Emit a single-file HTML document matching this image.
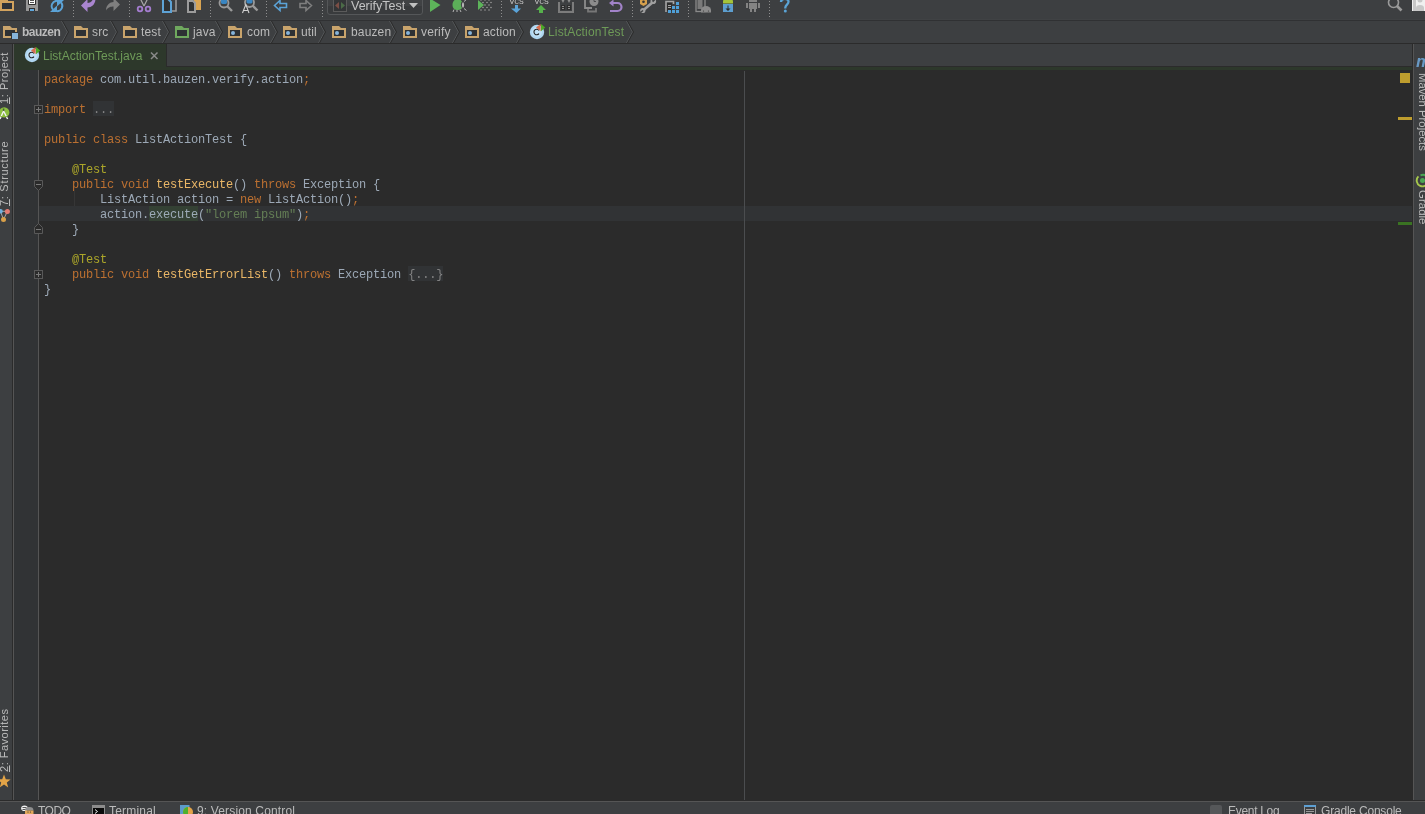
<!DOCTYPE html>
<html><head><meta charset="utf-8">
<style>
*{box-sizing:border-box}
html,body{margin:0;padding:0}
body{-webkit-font-smoothing:antialiased;width:1425px;height:814px;overflow:hidden;background:#3D3F41;position:relative;font-family:"Liberation Sans",sans-serif;}
.a{position:absolute}
#toolbar{left:0;top:0;width:1425px;height:19px;background:#3D3F41}
#tbl1{left:0;top:19px;width:1425px;height:1px;background:#404244}
#tbl2{left:0;top:20px;width:1425px;height:1px;background:#303133}
#crumbs{left:0;top:21px;width:1425px;height:22px;background:#3D3F41}
#crl{left:0;top:43px;width:1425px;height:1px;background:#2B2B2B}
#lstrip{left:0;top:44px;width:12px;height:756px;background:#3D3F41}
#lsl1{left:12px;top:44px;width:1px;height:756px;background:#2B2B2B}
#lsl2{left:13px;top:44px;width:1px;height:756px;background:#555555}
#rstrip{left:1414px;top:44px;width:11px;height:756px;background:#3D3F41}
#rsl1{left:1412px;top:44px;width:1px;height:756px;background:#2B2B2B}
#rsl2{left:1413px;top:44px;width:1px;height:756px;background:#555555}
#tabbar{left:14px;top:44px;width:1398px;height:22px;background:#3D3F41}
#tabline{left:166px;top:66px;width:1246px;height:1px;background:#2B2B2B}
#tabline2{left:166px;top:44px;width:1px;height:22px;background:#2B2B2B}
#tab{left:14px;top:44px;width:152px;height:26px;background:#2D382B}
#tabstrip{left:14px;top:67px;width:1398px;height:3px;background:#2D382B}
#gutter{left:14px;top:70px;width:24px;height:730px;background:#313335}
#gline{left:38px;top:70px;width:1px;height:730px;background:#555555}
#editor{left:39px;top:70px;width:1373px;height:730px;background:#2B2B2B}
#margin{left:744px;top:71px;width:1px;height:729px;background:#4B4D4F}
#curline{left:39px;top:206px;width:1373px;height:15px;background:#313335}
#botl1{left:0;top:800px;width:1425px;height:1px;background:#2B2B2B}
#botl2{left:0;top:801px;width:1425px;height:1px;background:#555555}
#status{left:0;top:802px;width:1425px;height:12px;background:#3D3F41}
.code{opacity:0.9;will-change:transform;font-family:"Liberation Mono",monospace;font-size:12px;letter-spacing:-0.2px;color:#A9B7C6;white-space:pre;line-height:15px;height:15px}
.k{color:#CC7832}
.s{color:#6A8759}
.an{color:#BBB529}
.m{color:#FFC66D}
.g{color:#8C8C8C}
.ui{will-change:transform;font-size:12px;color:#BBBBBB;white-space:nowrap;line-height:14px}
</style></head><body>
<div class="a" id="toolbar"></div>
<div class="a" id="tbl1"></div>
<div class="a" id="tbl2"></div>
<div class="a" id="crumbs"></div>
<div class="a" id="crl"></div>
<div class="a" id="lstrip"></div>
<div class="a" id="lsl1"></div>
<div class="a" id="lsl2"></div>
<div class="a" id="rstrip"></div>
<div class="a" id="rsl1"></div>
<div class="a" id="rsl2"></div>
<div class="a" id="tabbar"></div>
<div class="a" id="tabline"></div>
<div class="a" id="tabline2"></div>
<div class="a" id="tab"></div>
<div class="a" id="tabstrip"></div>
<div class="a" id="gutter"></div>
<div class="a" id="gline"></div>
<div class="a" id="editor"></div>
<div class="a" id="curline"></div>
<div class="a" id="margin"></div>
<div class="a" id="botl1"></div>
<div class="a" id="botl2"></div>
<div class="a" id="status"></div>





<!-- TOOLBAR -->
<svg class="a" style="left:0;top:0" width="800" height="19">
 <g fill="#8E8E8E"><g transform="translate(73,0)"><rect x="0" y="1" width="1" height="1"/><rect x="0" y="4" width="1" height="1"/><rect x="0" y="7" width="1" height="1"/><rect x="0" y="10" width="1" height="1"/><rect x="0" y="13" width="1" height="1"/><rect x="0" y="16" width="1" height="1"/></g><g transform="translate(129,0)"><rect x="0" y="1" width="1" height="1"/><rect x="0" y="4" width="1" height="1"/><rect x="0" y="7" width="1" height="1"/><rect x="0" y="10" width="1" height="1"/><rect x="0" y="13" width="1" height="1"/><rect x="0" y="16" width="1" height="1"/></g><g transform="translate(210,0)"><rect x="0" y="1" width="1" height="1"/><rect x="0" y="4" width="1" height="1"/><rect x="0" y="7" width="1" height="1"/><rect x="0" y="10" width="1" height="1"/><rect x="0" y="13" width="1" height="1"/><rect x="0" y="16" width="1" height="1"/></g><g transform="translate(266,0)"><rect x="0" y="1" width="1" height="1"/><rect x="0" y="4" width="1" height="1"/><rect x="0" y="7" width="1" height="1"/><rect x="0" y="10" width="1" height="1"/><rect x="0" y="13" width="1" height="1"/><rect x="0" y="16" width="1" height="1"/></g><g transform="translate(322,0)"><rect x="0" y="1" width="1" height="1"/><rect x="0" y="4" width="1" height="1"/><rect x="0" y="7" width="1" height="1"/><rect x="0" y="10" width="1" height="1"/><rect x="0" y="13" width="1" height="1"/><rect x="0" y="16" width="1" height="1"/></g><g transform="translate(501,0)"><rect x="0" y="1" width="1" height="1"/><rect x="0" y="4" width="1" height="1"/><rect x="0" y="7" width="1" height="1"/><rect x="0" y="10" width="1" height="1"/><rect x="0" y="13" width="1" height="1"/><rect x="0" y="16" width="1" height="1"/></g><g transform="translate(632,0)"><rect x="0" y="1" width="1" height="1"/><rect x="0" y="4" width="1" height="1"/><rect x="0" y="7" width="1" height="1"/><rect x="0" y="10" width="1" height="1"/><rect x="0" y="13" width="1" height="1"/><rect x="0" y="16" width="1" height="1"/></g><g transform="translate(688,0)"><rect x="0" y="1" width="1" height="1"/><rect x="0" y="4" width="1" height="1"/><rect x="0" y="7" width="1" height="1"/><rect x="0" y="10" width="1" height="1"/><rect x="0" y="13" width="1" height="1"/><rect x="0" y="16" width="1" height="1"/></g><g transform="translate(769,0)"><rect x="0" y="1" width="1" height="1"/><rect x="0" y="4" width="1" height="1"/><rect x="0" y="7" width="1" height="1"/><rect x="0" y="10" width="1" height="1"/><rect x="0" y="13" width="1" height="1"/><rect x="0" y="16" width="1" height="1"/></g></g>
 <!-- open -->
 <path d="M0 -2H8V1H14V11H0Z" fill="#D2A35E"/>
 <rect x="2" y="3" width="10" height="6" fill="#2F3338"/>
 <!-- save -->
 <rect x="26" y="-2" width="12" height="13" fill="#979797"/>
 <rect x="28" y="-2" width="8" height="7" rx="1" fill="#2E2E2E"/>
 <rect x="29" y="-2" width="6" height="6" fill="#FFFFFF"/>
 <rect x="30" y="0" width="4" height="1" fill="#555"/><rect x="30" y="2" width="4" height="1" fill="#555"/>
 <rect x="29" y="8" width="6" height="3" fill="#2E2E2E"/>
 <rect x="30" y="9" width="4" height="2" fill="#5FA8DE"/>
 <!-- sync -->
 <path d="M57 0.8A5.3 5.3 0 0 0 53 9.6" fill="none" stroke="#5BA3D7" stroke-width="1.9"/>
 <path d="M50 12H57V5.5Z" fill="#5BA3D7"/>
 <path d="M57 11.2A5.3 5.3 0 0 0 61 2.4" fill="none" stroke="#5BA3D7" stroke-width="1.9"/>
 <path d="M64 0H57V6.5Z" fill="#5BA3D7"/>
 <!-- undo -->
 <path d="M81 5.5L87.5 -1V3C90 3 92.5 1.5 93 -1.5H95.5C95.5 4 92 7.5 87.5 7.5V12Z" fill="#A985CF"/>
 <!-- redo -->
 <path d="M120 4.5L113.5 -2V2C110 2 106 5 106 10.5C108 7 111 6.5 113.5 6.5V11Z" fill="#7F7F7F"/>
 <!-- cut -->
 <path d="M140.5 -1L144 6M147.5 -1L144 6" stroke="#A8A8A8" stroke-width="1.2" fill="none"/>
 <circle cx="140" cy="9" r="2.3" fill="none" stroke="#A47DCF" stroke-width="1.8"/>
 <circle cx="148" cy="9" r="2.3" fill="none" stroke="#A47DCF" stroke-width="1.8"/>
 <!-- copy -->
 <path d="M170 -1H176V11H170Z" fill="none" stroke="#9A9A9A" stroke-width="1.6"/>
 <path d="M163 -1H168L171 2V12H163Z" fill="#2F3133" stroke="#5EA3D6" stroke-width="2"/>
 <!-- paste -->
 <rect x="194" y="-1" width="7" height="11" fill="#D9A452"/>
 <path d="M188 1H193L195 3V12H188Z" fill="#2F3133" stroke="#9C9C9C" stroke-width="2"/>
 <!-- find -->
 <circle cx="224" cy="3" r="4.5" fill="none" stroke="#9A9A9A" stroke-width="1.8"/>
 <path d="M221 -1H227V2.5Q227 4 224 4Q221 4 221 2.5Z" fill="#3A86C2"/>
 <path d="M227 6L232 11" stroke="#9A9A9A" stroke-width="2.4"/>
 <!-- replace -->
 <circle cx="249.5" cy="2.5" r="4.5" fill="none" stroke="#9A9A9A" stroke-width="1.8"/>
 <path d="M246.5 -1.5H252.5V2Q252.5 3.5 249.5 3.5Q246.5 3.5 246.5 2Z" fill="#3A86C2"/>
 <path d="M252.5 5.5L257.5 10.5" stroke="#9A9A9A" stroke-width="2.4"/>
 <path d="M242.5 13L245.8 4.5L249 13M243.5 10.5H248" stroke="#D0D0D0" stroke-width="1.1" fill="none"/>
 <!-- back -->
 <path d="M274.5 5.5L280 0.5V3.5H286.5V7.5H280V10.5Z" fill="none" stroke="#5BA3D7" stroke-width="1.6" stroke-linejoin="miter"/>
 <!-- forward -->
 <path d="M311.5 5.5L306 0.5V3.5H300V7.5H306V10.5Z" fill="none" stroke="#7F7F7F" stroke-width="1.6"/>
 <!-- combo -->
 <path d="M327.5 -3V12A2.5 2.5 0 0 0 330 14.5H420A2.5 2.5 0 0 0 422.5 12V-3" fill="#393B3D" stroke="#555759" stroke-width="1"/>
 <rect x="328" y="-3" width="94" height="9" fill="#404244"/>
 <rect x="333.5" y="-1.5" width="13" height="13" fill="#333537" stroke="#5B5B5B" stroke-width="1"/>
 <path d="M339 2L335 5.5L339 9Z" fill="#7B4E45"/>
 <path d="M341 2L345 5.5L341 9Z" fill="#4B6B47"/>
 <path d="M409 3H418L413.5 8Z" fill="#C0C0C0"/>
 <!-- run -->
 <path d="M430 -1.5L440.5 5L430 12Z" fill="#5DB35A"/>
 <!-- debug -->
 <path d="M458 -1C454 -1 452.5 2 452.5 5C452.5 8 454.5 10 458 10C460 10 461.5 9 462 8C460.5 6 460.5 3 462 1.5C461 0 459.5 -1 458 -1Z" fill="#5CAE59"/>
 <path d="M463 2C461.5 3.5 461.5 6.5 463 8C464.5 6.5 464.5 3.5 463 2Z" fill="#B5B5B5"/>
 <path d="M464 1.5L466.5 -0.5M464 8.5L466.5 10.5M454 9.5L453 12M457 10L457 12M460 10L461 12" stroke="#B5B5B5" stroke-width="1" fill="none"/>
 <!-- coverage -->
 <path d="M478 0L484 5L478 10Z" fill="#5DB35A"/>
 <g fill="#9A9A9A"><circle cx="481" cy="0" r="0.8"/><circle cx="485" cy="0" r="0.8"/><circle cx="489" cy="0" r="0.8"/><circle cx="483" cy="2.5" r="0.8"/><circle cx="487" cy="2.5" r="0.8"/><circle cx="491" cy="2.5" r="0.8"/><circle cx="485" cy="5" r="0.8"/><circle cx="489" cy="5" r="0.8"/><circle cx="483" cy="7.5" r="0.8"/><circle cx="487" cy="7.5" r="0.8"/><circle cx="491" cy="7.5" r="0.8"/><circle cx="481" cy="10" r="0.8"/><circle cx="485" cy="10" r="0.8"/><circle cx="489" cy="10" r="0.8"/></g>
 <!-- vcs update -->
 <text x="509.5" y="4" font-family="Liberation Mono" font-size="8" fill="#C8C8C8" style="will-change:transform">VCS</text>
 <path d="M515 5H518V8.5H521L516.5 13L511 8.5H515Z" fill="#5AA3D8"/>
 <text x="534.5" y="4" font-family="Liberation Mono" font-size="8" fill="#C8C8C8">VCS</text>
 <path d="M541 5L546 10H543V13H539V10H536Z" fill="#56B04B"/>
 <!-- update project -->
 <path d="M559 2V12H573V2" fill="none" stroke="#7C7C7C" stroke-width="2"/>
 <rect x="561" y="5" width="4" height="5" fill="#2E2E2E"/><rect x="567" y="5" width="4" height="5" fill="#2E2E2E"/>
 <g fill="#8C8C8C"><rect x="562" y="6" width="2" height="1"/><rect x="562" y="8" width="2" height="1"/><rect x="568" y="6" width="2" height="1"/><rect x="568" y="8" width="2" height="1"/>
 <path d="M561.5 0H564.5L563 3Z"/><path d="M567.5 0H570.5L569 3Z"/></g>
 <!-- history -->
 <path d="M585 -1V8H592" fill="none" stroke="#8C8C8C" stroke-width="1.8"/>
 <path d="M588 9V11.5H596V8" fill="none" stroke="#777" stroke-width="1.8"/>
 <circle cx="594" cy="1.5" r="4.5" fill="#8C8C8C"/>
 <path d="M594 -1V1.5H596" stroke="#3D3F41" stroke-width="0.8" fill="none"/>
 <!-- revert -->
 <path d="M610 11H617.5A4 4 0 0 0 617.5 3H613" fill="none" stroke="#A283C9" stroke-width="2.2"/>
 <path d="M609 3L613.5 -0.5V6.5Z" fill="#A283C9"/>
 <!-- settings -->
 <path d="M653 2L643 10.5" stroke="#A0A0A0" stroke-width="2.6"/>
 <circle cx="653.3" cy="1.3" r="2.8" fill="#A0A0A0"/>
 <path d="M652.5 1.5L655 -1" stroke="#3D3F41" stroke-width="1.8"/>
 <circle cx="642.8" cy="10.5" r="2.6" fill="#A0A0A0"/>
 <path d="M643 10.5L640.5 12.5" stroke="#3D3F41" stroke-width="1.6"/>
 <path d="M640 -1H647V4L643.5 6L640 4Z" fill="#D6A04C"/>
 <circle cx="643.5" cy="1.8" r="1.3" fill="#333"/>
 <!-- project structure -->
 <path d="M666 12V1.5H673.5V4" fill="none" stroke="#A5A5A5" stroke-width="1.6"/>
 <rect x="667" y="3" width="5" height="8" fill="#2E2E2E"/>
 <rect x="668" y="5" width="3" height="1" fill="#A5A5A5"/><rect x="668" y="7" width="3" height="1" fill="#A5A5A5"/>
 <g fill="#4FA0D8"><rect x="668" y="10" width="3" height="3"/><rect x="672" y="10" width="3" height="3"/><rect x="676" y="10" width="3" height="3"/><rect x="672" y="6" width="3" height="3"/><rect x="676" y="6" width="3" height="3"/><rect x="676" y="2" width="3" height="3"/></g>
 <!-- avd -->
 <rect x="696" y="-1" width="9" height="12.5" fill="none" stroke="#8A8A8A" stroke-width="1.3"/>
 <rect x="697.5" y="0" width="5" height="9" fill="#7A7A7A"/>
 <path d="M701 12.5V10A5 4 0 0 1 711 10V12.5Z" fill="#8A8A8A"/>
 <circle cx="703.5" cy="11" r="0.6" fill="#333"/><circle cx="708.5" cy="11" r="0.6" fill="#333"/>
 <!-- sdk -->
 <path d="M723 3.5V1.5A5 4 0 0 1 733 1.5V3.5Z" fill="#A4C43A"/>
 <rect x="723" y="4" width="10" height="8" fill="#5D9ECF"/>
 <path d="M727.5 5.5H728.5V8.5H730.5L728 11L725.5 8.5H727.5Z" fill="#2B2B2B"/>
 <!-- android -->
 <g fill="#848484"><rect x="749" y="3" width="8" height="6"/><rect x="746" y="3" width="2" height="5"/><rect x="758" y="3" width="2" height="5"/><rect x="750" y="9" width="2" height="3"/><rect x="754" y="9" width="2" height="3"/><rect x="749" y="0" width="8" height="2"/></g>
 <!-- help -->
 <path d="M781 2C781 -1.8 788.5 -2.2 788.5 1.8C788.5 4.5 785.3 4.8 785.3 7.8V8.5" fill="none" stroke="#5BA4D6" stroke-width="2.3"/>
 <circle cx="785.3" cy="11" r="1.5" fill="#5BA4D6"/>
</svg>
<div class="a ui" style="left:351px;top:-1px;color:#C4C4C4;font-size:12.5px">VerifyTest</div>
<svg class="a" style="left:1385px;top:0" width="40" height="19">
 <circle cx="8.5" cy="2.5" r="5" fill="none" stroke="#9A9A9A" stroke-width="1.6"/>
 <path d="M12 6L16.5 10.5" stroke="#9A9A9A" stroke-width="2.6"/>
 <rect x="27" y="-2" width="13" height="13" fill="#F0F0F0"/>
 <rect x="28" y="-2" width="3" height="13" fill="#C8C8C8"/>
 <circle cx="35" cy="0" r="2.5" fill="#C8C8C8"/>
 <path d="M31 11V8A4 3 0 0 1 39 8V11Z" fill="#C8C8C8"/>
</svg>

<!-- SIDE STRIPS -->
<div class="a ui" style="left:-2px;top:104px;transform:rotate(-90deg);transform-origin:0 0;font-size:11px;line-height:13px;letter-spacing:0.55px"><span style="text-decoration:underline">1</span>: Project</div>
<div class="a ui" style="left:-2px;top:206px;transform:rotate(-90deg);transform-origin:0 0;font-size:11px;line-height:13px;letter-spacing:0.7px"><span style="text-decoration:underline">7</span>: Structure</div>
<div class="a ui" style="left:-2px;top:772px;transform:rotate(-90deg);transform-origin:0 0;font-size:11px;line-height:13px;letter-spacing:0.5px"><span style="text-decoration:underline">2</span>: Favorites</div>
<svg class="a" style="left:0;top:104px" width="12" height="20">
 <circle cx="4.2" cy="8.4" r="5.2" fill="#8CBF3F"/>
 <path d="M3.6 4.5L3.6 9" stroke="#4A5A3A" stroke-width="1.5"/>
 <path d="M3.6 7L0 15M3.6 7L7.6 15" stroke="#F2F2F2" stroke-width="1.4" fill="none"/>
 <path d="M0.5 12.5H7" stroke="#8CBF3F" stroke-width="1"/>
</svg>
<svg class="a" style="left:0;top:204px" width="12" height="20">
 <path d="M0.5 7.3H7.4M0.5 7.3L3.5 15.5M7.4 7.3L3.5 15.5" stroke="#A8A8A8" stroke-width="1"/>
 <circle cx="0.5" cy="7.3" r="2.3" fill="#6FB0E0"/>
 <circle cx="7.4" cy="7.4" r="2.5" fill="#E47B73"/>
 <circle cx="3.5" cy="15.5" r="2.5" fill="#D9A049"/>
</svg>
<svg class="a" style="left:0;top:774px" width="12" height="16">
 <path d="M4 0.5L5.8 5.3L10.6 5.4L6.8 8.5L8.2 13.5L4 10.6L-0.2 13.5L1.2 8.5L-2.6 5.4L2.2 5.3Z" fill="#E3A447"/>
</svg>
<div class="a ui" style="left:1429px;top:73px;transform:rotate(90deg);transform-origin:0 0;font-size:11.3px;line-height:13px">Maven Projects</div>
<div class="a ui" style="left:1429px;top:190px;transform:rotate(90deg);transform-origin:0 0;font-size:11.5px;line-height:13px">Gradle</div>
<div class="a" style="left:1416px;top:52px;font:italic bold 17px 'Liberation Sans',sans-serif;color:#6899C4;line-height:20px;will-change:transform">m</div>
<svg class="a" style="left:1414px;top:172px" width="11" height="18">
 <path d="M4.4 4.4A5.8 5.8 0 1 0 14.3 8.8" fill="none" stroke="#A6C84C" stroke-width="1.9"/>
 <path d="M6.5 3.3A5.8 5.8 0 0 1 12.5 4" fill="none" stroke="#4AA653" stroke-width="1.9"/>
 <circle cx="8.5" cy="8.6" r="2.5" fill="#4AA653"/>
</svg>
<div class="a" style="left:1400px;top:73px;width:10px;height:10px;background:#BE9D2E"></div>
<div class="a" style="left:1398px;top:117px;width:14px;height:3px;background:#BE9D2E"></div>
<div class="a" style="left:1398px;top:222px;width:14px;height:3px;background:#3A7322"></div>

<!-- TAB -->
<svg class="a" style="left:0;top:0" width="0" height="0">
 <defs>
  <g id="cls">
   <circle cx="10" cy="11" r="7.2" fill="#AFD6F0"/>
   <circle cx="10" cy="11" r="5" fill="#C2E2F7"/>
   <path d="M12 9.3A2.8 2.8 0 1 0 12 12.7" fill="none" stroke="#222" stroke-width="1.1"/>
   <path d="M13.6 3L9 6.6L13.6 10.2Z" fill="#D76E4E"/>
   <path d="M14 3L18.2 6.6L14 10.2Z" fill="#4CA825"/>
  </g>
 </defs>
</svg>
<svg class="a" style="left:22px;top:44px" width="22" height="22"><use href="#cls"/></svg>
<div class="a ui" id="tabtext" style="left:43px;top:49px;color:#6E9A58">ListActionTest.java</div>
<svg class="a" style="left:148px;top:49px" width="12" height="12"><path d="M3 3.5L9.5 10M9.5 3.5L3 10" stroke="#8A8A8A" stroke-width="1.5"/></svg>

<!-- BREADCRUMBS -->
<svg class="a" style="left:0;top:21px" width="660" height="22">
 <defs>
  <g id="chev"><path d="M0.5 0 L6.5 11 L0.5 22" fill="none" stroke="#56595B" stroke-width="1"/><path d="M1.5 0 L7.5 11 L1.5 22" fill="none" stroke="#2B2B2B" stroke-width="1"/></g>
  <g id="fold"><path d="M0 0h7l2 2h5v10h-14z" fill="#C9A46C"/><rect x="2" y="4" width="10" height="6" fill="#2E3134"/></g>
  <g id="pkg"><use href="#fold"/><circle cx="5" cy="7" r="2" fill="#86B4DA"/></g>
 </defs>
 <use href="#chev" x="61" y="0"/>
 <use href="#chev" x="110" y="0"/>
 <use href="#chev" x="162" y="0"/>
 <use href="#chev" x="215" y="0"/>
 <use href="#chev" x="270" y="0"/>
 <use href="#chev" x="318" y="0"/>
 <use href="#chev" x="389" y="0"/>
 <use href="#chev" x="452" y="0"/>
 <use href="#chev" x="516" y="0"/>
 <use href="#chev" x="626" y="0"/>
 <g transform="translate(3,5)"><use href="#fold"/><rect x="8" y="6" width="7" height="7" fill="#2E3134"/><rect x="9" y="7" width="6" height="6" fill="#86B4DA"/></g>
 <use href="#fold" x="74" y="5"/>
 <use href="#fold" x="123" y="5"/>
 <g transform="translate(175,5)"><path d="M0 0h7l2 2h5v10h-14z" fill="#6FA85E"/><rect x="2" y="4" width="10" height="6" fill="#2E3134"/></g>
 <use href="#pkg" x="228" y="5"/>
 <use href="#pkg" x="283" y="5"/>
 <use href="#pkg" x="332" y="5"/>
 <use href="#pkg" x="403" y="5"/>
 <use href="#pkg" x="465" y="5"/>
</svg>
<div class="a ui" style="left:22px;top:25px;font-weight:bold;letter-spacing:-0.5px">bauzen</div>
<div class="a ui" style="left:92px;top:25px;letter-spacing:0.15px">src</div>
<div class="a ui" style="left:141px;top:25px;letter-spacing:0.15px">test</div>
<div class="a ui" style="left:193px;top:25px;letter-spacing:0.15px">java</div>
<div class="a ui" style="left:247px;top:25px;letter-spacing:0.15px">com</div>
<div class="a ui" style="left:301px;top:25px;letter-spacing:0.15px">util</div>
<div class="a ui" style="left:351px;top:25px;letter-spacing:0.15px">bauzen</div>
<div class="a ui" style="left:421px;top:25px;letter-spacing:0.15px">verify</div>
<div class="a ui" style="left:483px;top:25px;letter-spacing:0.15px">action</div>
<svg class="a" style="left:527px;top:21px" width="22" height="22"><use href="#cls"/></svg>
<div class="a ui" style="left:548px;top:25px;color:#6E9A58;letter-spacing:0.15px">ListActionTest</div>


<!-- EDITOR DECOR -->
<div class="a" style="left:93px;top:101px;width:21px;height:15px;background:#313335"></div>
<div class="a" style="left:408px;top:266px;width:35px;height:15px;background:#313335"></div>
<div class="a" style="left:149px;top:206px;width:49px;height:15px;background:#344134"></div>
<div class="a" style="left:74px;top:191px;width:1px;height:15px;background:#363636"></div>
<svg class="a" style="left:0;top:0" width="50" height="300">
 <g fill="#2B2B2B" stroke="#595959" stroke-width="1">
  <rect x="34.5" y="105.5" width="8" height="8"/>
  <rect x="34.5" y="270.5" width="8" height="8"/>
  <path d="M34.5 180.5H42.5V186.5L38.5 190.5L34.5 186.5Z"/>
  <path d="M34.5 233.5H42.5V227.5L38.5 223.5L34.5 227.5Z"/>
 </g>
 <g fill="#7A7A7A">
  <rect x="36" y="109" width="5" height="1"/><rect x="38" y="107" width="1" height="5"/>
  <rect x="36" y="274" width="5" height="1"/><rect x="38" y="272" width="1" height="5"/>
  <rect x="36" y="184" width="5" height="1"/>
  <rect x="36" y="229" width="5" height="1"/>
 </g>
</svg>

<!-- CODE -->
<div class="a code" style="left:44px;top:73px"><span class="k">package</span> com.util.bauzen.verify.action<span class="k">;</span></div>
<div class="a code" style="left:44px;top:103px"><span class="k">import</span> <span class="g">...</span></div>
<div class="a code" style="left:44px;top:133px"><span class="k">public class</span> ListActionTest {</div>
<div class="a code" style="left:44px;top:163px">    <span class="an">@Test</span></div>
<div class="a code" style="left:44px;top:178px">    <span class="k">public void</span> <span class="m">testExecute</span>() <span class="k">throws</span> Exception {</div>
<div class="a code" style="left:44px;top:193px">        ListAction action = <span class="k">new</span> ListAction()<span class="k">;</span></div>
<div class="a code" style="left:44px;top:208px">        action.execute(<span class="s">"lorem ipsum"</span>)<span class="k">;</span></div>
<div class="a code" style="left:44px;top:223px">    }</div>
<div class="a code" style="left:44px;top:253px">    <span class="an">@Test</span></div>
<div class="a code" style="left:44px;top:268px">    <span class="k">public void</span> <span class="m">testGetErrorList</span>() <span class="k">throws</span> Exception <span class="g">{...}</span></div>
<div class="a code" style="left:44px;top:283px">}</div>

<!-- STATUS -->
<svg class="a" style="left:0;top:802px" width="330" height="12">
 <ellipse cx="24.5" cy="6.3" rx="3.3" ry="2.8" fill="#F2F2F2"/>
 <path d="M28 6L29.5 7" stroke="#F2F2F2" stroke-width="1"/>
 <rect x="22.5" y="5" width="4" height="0.9" fill="#444"/><rect x="22.5" y="7" width="4" height="0.9" fill="#444"/>
 <path d="M25 8.5C25 5.5 27 5 29.5 5C32 5 33.5 6 33.5 8.5Z" fill="#8E8E8E"/>
 <path d="M25 8.5H33.5V12H25Z" fill="#E2A85B"/>
 <circle cx="28" cy="10" r="0.6" fill="#333"/><circle cx="30.5" cy="10" r="0.6" fill="#333"/>
 <rect x="92" y="3" width="13" height="9" fill="#8C8C8C"/>
 <rect x="93" y="6" width="11" height="6" fill="#0A0A0A"/>
 <path d="M95 7.5L97.5 9.5L95 11.5" stroke="#EEE" stroke-width="1" fill="none"/>
 <rect x="180" y="3" width="9.5" height="9" fill="#5B9BCB"/>
 <circle cx="188" cy="10" r="5" fill="#E3A34A"/>
 <path d="M188 5A5 5 0 0 0 188 15Z" fill="#4DB02E"/>
</svg>
<svg class="a" style="left:1200px;top:802px" width="130" height="12">
 <rect x="10" y="3" width="12" height="11" rx="2" fill="#555759"/>
 <rect x="104" y="3" width="12" height="10" fill="#9A9A9A"/>
 <rect x="104" y="3" width="12" height="2" fill="#5D9FD3"/>
 <rect x="105" y="5" width="10" height="8" fill="#3D3F41"/>
 <rect x="106" y="7" width="8" height="1" fill="#9A9A9A"/><rect x="106" y="9" width="8" height="1" fill="#9A9A9A"/><rect x="106" y="11" width="6" height="1" fill="#9A9A9A"/>
</svg>

<div class="a ui" style="left:38px;top:804px;letter-spacing:-0.5px">TODO</div>
<div class="a ui" style="left:109px;top:804px;letter-spacing:0.2px">Terminal</div>
<div class="a ui" style="left:197px;top:804px;letter-spacing:0.15px">9: Version Control</div>
<div class="a ui" style="left:1228px;top:804px;letter-spacing:-0.3px">Event Log</div>
<div class="a ui" style="left:1321px;top:804px;letter-spacing:-0.2px">Gradle Console</div>

</body></html>
